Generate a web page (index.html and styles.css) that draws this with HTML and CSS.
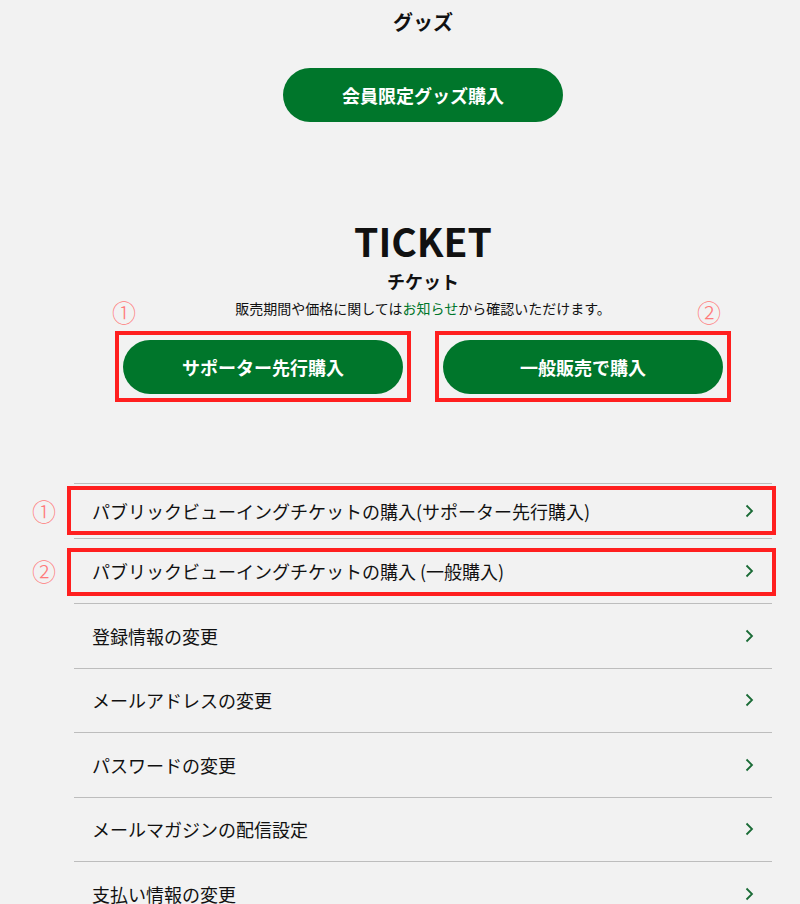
FILE: index.html
```html
<!DOCTYPE html>
<html lang="ja">
<head>
    <meta charset="UTF-8">
    <meta name="viewport" content="width=device-width, initial-scale=1.0">
    <title>マイページ</title>
    <link rel="stylesheet" href="styles.css">
</head>
<body>
    <main class="page">
        <!-- グッズ -->
        <section class="goods">
            <h3 class="sec-sub">グッズ</h3>
            <a class="btn btn-goods" href="#">会員限定グッズ購入</a>
        </section>

        <!-- チケット -->
        <section class="ticket">
            <h2 class="sec-title">TICKET</h2>
            <h3 class="sec-sub">チケット</h3>
            <p class="note">販売期間や価格に関しては<a href="#">お知らせ</a>から確認いただけます。</p>
            <div class="ticket-btns">
                <div class="hl">
                    <span class="num num-left">①</span>
                    <a class="btn" href="#">サポーター先行購入</a>
                </div>
                <div class="hl">
                    <span class="num num-right">②</span>
                    <a class="btn" href="#">一般販売で購入</a>
                </div>
            </div>
        </section>

        <!-- メニュー -->
        <ul class="menu">
            <li class="menu-item item-first">
                <span class="num">①</span>
                <span class="hl-box"></span>
                <a class="menu-link" href="#">パブリックビューイングチケットの購入(サポーター先行購入)
                    <svg class="arrow" width="9" height="14" viewBox="0 0 9 14"><polyline points="1.5,1.5 7,7 1.5,12.5"/></svg>
                </a>
            </li>
            <li class="menu-item item-second">
                <span class="num">②</span>
                <span class="hl-box"></span>
                <a class="menu-link" href="#">パブリックビューイングチケットの購入 (一般購入)
                    <svg class="arrow" width="9" height="14" viewBox="0 0 9 14"><polyline points="1.5,1.5 7,7 1.5,12.5"/></svg>
                </a>
            </li>
            <li class="menu-item">
                <a class="menu-link" href="#">登録情報の変更
                    <svg class="arrow" width="9" height="14" viewBox="0 0 9 14"><polyline points="1.5,1.5 7,7 1.5,12.5"/></svg>
                </a>
            </li>
            <li class="menu-item">
                <a class="menu-link" href="#">メールアドレスの変更
                    <svg class="arrow" width="9" height="14" viewBox="0 0 9 14"><polyline points="1.5,1.5 7,7 1.5,12.5"/></svg>
                </a>
            </li>
            <li class="menu-item">
                <a class="menu-link" href="#">パスワードの変更
                    <svg class="arrow" width="9" height="14" viewBox="0 0 9 14"><polyline points="1.5,1.5 7,7 1.5,12.5"/></svg>
                </a>
            </li>
            <li class="menu-item">
                <a class="menu-link" href="#">メールマガジンの配信設定
                    <svg class="arrow" width="9" height="14" viewBox="0 0 9 14"><polyline points="1.5,1.5 7,7 1.5,12.5"/></svg>
                </a>
            </li>
            <li class="menu-item">
                <a class="menu-link" href="#">支払い情報の変更
                    <svg class="arrow" width="9" height="14" viewBox="0 0 9 14"><polyline points="1.5,1.5 7,7 1.5,12.5"/></svg>
                </a>
            </li>
        </ul>
    </main>
</body>
</html>
```

FILE: styles.css
```css
body {
    margin: 0;
    background: #f2f2f2;
    color: #111;
    font-family: "Noto Sans CJK JP", "Noto Sans", sans-serif;
}
.page {
    width: 698px;
    margin-left: 74px;
    text-align: center;
}
.sec-sub {
    margin: 0;
    font-size: 18px;
    line-height: 24px;
    font-weight: 700;
}
.goods .sec-sub {
    margin-top: 10px;
    font-size: 20px;
}
.btn {
    display: flex;
    align-items: center;
    justify-content: center;
    width: 280px;
    height: 54px;
    border-radius: 27px;
    background: #00762b;
    color: #fff;
    font-size: 18px;
    font-weight: 700;
    text-decoration: none;
}
.btn-goods {
    margin: 34px auto 0;
}
.sec-title {
    margin: 94px 0 0;
    font-size: 39px;
    line-height: 48px;
    font-weight: 700;
}
.ticket .sec-sub {
    margin-top: 5px;
}
.note {
    margin: 5px 0 0;
    font-size: 14px;
    line-height: 20px;
}
.note a {
    color: #00762b;
    text-decoration: none;
}
.ticket-btns {
    display: flex;
    justify-content: center;
    gap: 24px;
    margin-top: 13px;
}
.hl {
    position: relative;
    border: 4px solid #ff1f1f;
    padding: 5px 4px 4px;
}
.num {
    position: absolute;
    font-size: 24px;
    line-height: 26px;
    font-weight: 300;
    color: #ff7b7b;
}
.num-left {
    top: -36px;
    left: -7px;
}
.num-right {
    top: -36px;
    right: 6px;
}
.menu {
    list-style: none;
    margin: 81px 0 0;
    padding: 0;
    border-top: 1px solid #bdbdbd;
    text-align: left;
}
.menu-item {
    position: relative;
    border-bottom: 1px solid #bdbdbd;
}
.menu-item .num {
    top: 50%;
    left: -42px;
    margin-top: -13px;
}
.menu-link {
    display: flex;
    align-items: center;
    justify-content: space-between;
    height: 63.5px;
    padding: 0 18px;
    color: #111;
    font-size: 18px;
    text-decoration: none;
}
.item-first .menu-link {
    height: 54px;
}
.item-second .menu-link {
    height: 64px;
}
.hl-box {
    position: absolute;
    left: -7px;
    right: -4px;
    border: 4px solid #ff1f1f;
    pointer-events: none;
}
.item-first .hl-box {
    top: 2px;
    bottom: 3px;
}
.item-second .hl-box {
    top: 9px;
    bottom: 7px;
}
.arrow {
    flex-shrink: 0;
    fill: none;
    stroke: #1a6b36;
    stroke-width: 1.8;
}
```
